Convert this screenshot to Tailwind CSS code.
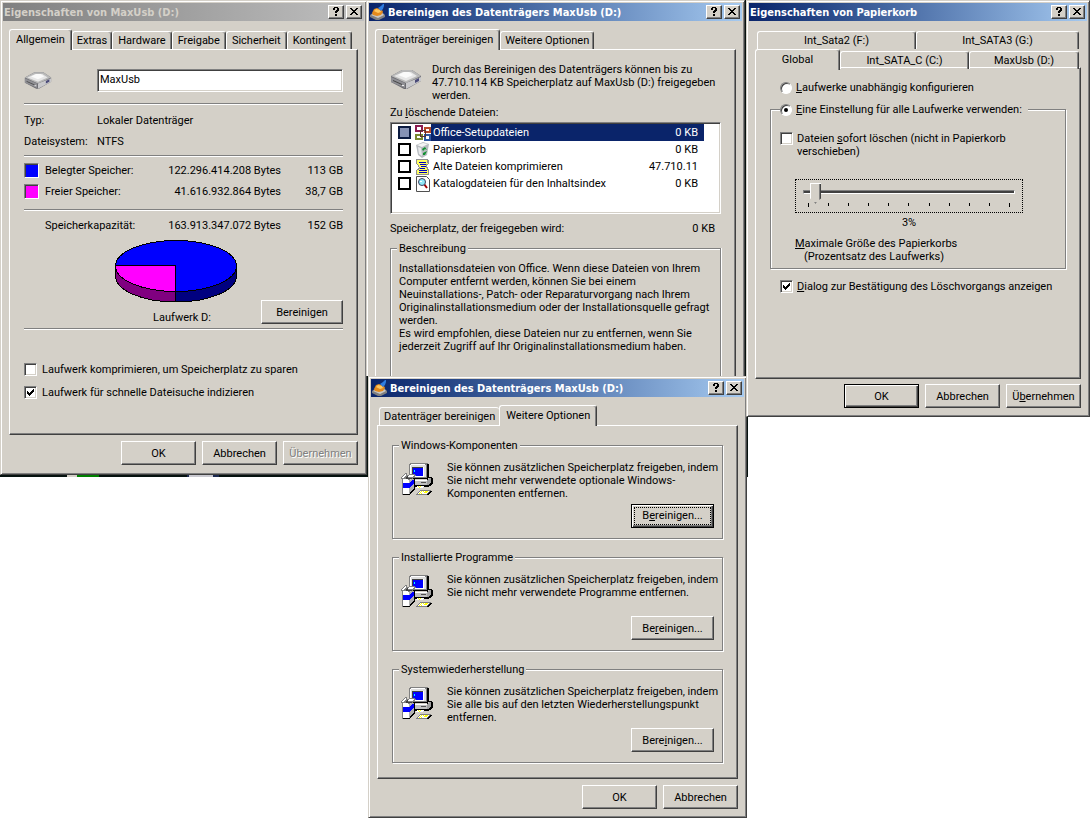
<!DOCTYPE html>
<html lang="de">
<head>
    <meta charset="UTF-8">
    <meta name="viewport" content="width=device-width, initial-scale=1.0">
    <title>Eigenschaften von MaxUsb (D:)</title>
    <script src="https://cdn.jsdelivr.net/npm/@tailwindcss/browser@4"></script>
</head>
<body class="bg-white font-[Roboto,sans-serif] text-[11px] leading-[13px] text-black">

<!-- Shared icons -->
<svg class="hidden">
    <symbol id="help" viewBox="0 0 14 12"><path d="M4 2h1V1h4v1h1v3H9v1H8v1H6V5h1V4h1V2H6v2H4zM6 8h2v2H6z"/></symbol>
    <symbol id="close" viewBox="0 0 14 12"><path d="M3 2h2v1h1v1h2V3h1V2h2v1h-1v1H9v1H8v1h1v1h1v1h1v1H9V8H8V7H6v1H5v1H3V8h1V7h1V6h1V5H5V4H4V3H3z"/></symbol>
    <symbol id="check" viewBox="0 0 9 9"><path d="M1 3h1v1h1v1h1V4h1V3h1V2h1V1h1v3H7v1H6v1H5v1H4v1H3V7H2V6H1z"/></symbol>
    <symbol id="drive" viewBox="0 0 32 19">
        <path d="M1 6 12 0h10l9 6v5l-14 8h-3L1 12z" fill="#6b6b70"/>
        <path d="M1 6 12 0h10l9 6-15 7z" fill="#b9b9b9"/>
        <path d="m4 6 9-4h8l6 4-11 5z" fill="#e6e6e6"/>
        <path d="m8 5 6-3h5l4 3-7 3z" fill="#fafafa"/>
        <path d="m1 7 14 6v5L1 12z" fill="#909095"/>
        <path d="m3 10 9 4v1l-9-4z" fill="#444"/>
        <path d="m16 13 15-6v4l-15 8z" fill="#c9c9cc"/>
        <path d="m25 10 4-2v3l-4 2z" fill="#4a4a78"/>
        <path d="M12 15h2v1h-2z" fill="#eee"/>
    </symbol>
    <symbol id="cleanup" viewBox="0 0 16 16">
        <path d="m0 11 4-3h8l3 3v2l-6 3H6l-6-3z" fill="#808080"/>
        <path d="m1 11 4-2h7l2 2-6 3z" fill="#c8c8c8"/>
        <path d="m2 9 2-4 3-1 5 2 1 2-2 3-4 1-4-1z" fill="#e48a1c"/>
        <path d="m4 7 2-2 4 1 1 2-3 1z" fill="#ffc860"/>
        <path d="M8 4 11 2 13 0h1v2l-1 3-2 2z" fill="#2f7de0"/>
    </symbol>
    <symbol id="setup" viewBox="0 0 32 32">
        <!-- monitor -->
        <path d="M8 1h1V0h18v15h-1v1H9v-1H8z" fill="#808080"/>
        <path d="M27 1h1v14h-1v1H10v-1h16V1z" fill="#000"/>
        <path d="M9 2h1V1h14v1h1v12H9z" fill="#dedede"/>
        <path d="M9 2h1V1h14v1H10v12H9z" fill="#fff"/>
        <path d="M11 4h11v1H12v8h-1z" fill="#404040"/>
        <path d="M12 5h10v8H12z" fill="#0000ff"/>
        <path d="M22 4h1v10H12v-1h10z" fill="#fff"/>
        <path d="M13 7h1v2h-1z" fill="#00ffff"/>
        <!-- case -->
        <path d="M14 17h12v-1h2v-2h3v1h1v6h-1v1h-1v1h-2v1H14z" fill="#000"/>
        <path d="M14 17h12v5H14z" fill="#c0c0c0"/>
        <path d="M14 17h12v1H14z" fill="#fff"/>
        <path d="M26 17h1v-1h1v-1h2v5h-1v1h-1v1h-2z" fill="#a0a0a0"/>
        <path d="M20 19h5v1h-5z" fill="#505050"/>
        <path d="M16 23h7v1h-1v1h-7v-1h1z" fill="#fff"/>
        <path d="M17 23h1v1h-1zM19 23h1v1h-1zM18 24h1v1h-1z" fill="#ffff00"/>
        <!-- box -->
        <path d="M13 16h1v11h-1v1h-1v1h-1v1h-1v1H9v1H2v-1h6V18h1v-1h2v-1z" fill="#000"/>
        <path d="M1 16h1v16H1z" fill="#808080"/>
        <path d="M2 16h6v15H2z" fill="#fff"/>
        <path d="M8 17h2v-1h3v10h-1v1h-1v1h-1v1H9v2H8z" fill="#b0b0b0"/>
        <path d="M2 20h6v5H2zM8 20h1v-1h1v-1h1v-1h2v4h-1v1h-1v1h-1v1H9v1H8z" fill="#0000ff"/>
        <path d="M0 14h1v-1h1v-1h1v-1h1v-1h2v2h2v-1h6v1h1v1h-1v1h-2v2H9v1H7v-1H0z" fill="#808080"/>
        <path d="M1 14h1v-1h1v-1h1v-1h1v2H4v1H3v1H1zM8 12h5v1h-1v1H7v-1h1z" fill="#fff"/>
        <path d="M6 13h1v2h4v1H5v-2h1z" fill="#404040"/>
        <!-- keyboard -->
        <path d="M18 28h1v-1h11v1h-1v1h-1v1h-1v1h-1v1H15v-1h1v-1h1v-1h1z" fill="#808080"/>
        <path d="M19 28h9v1h-1v1h-1v1h-9v-1h1v-1h1z" fill="#fff"/>
        <path d="M20 28h1v1h-1zM22 28h1v1h-1zM24 28h3v1h-3zM19 29h1v1h-1zM23 29h3v1h-3zM18 30h1v1h-1zM20 30h1v1h-1z" fill="#ffff00"/>
        <path d="M30 28h1v1h-1v1h-1v1h-1v1h-2v-1h1v-1h1v-1h1v-1z" fill="#000"/>
    </symbol>
</svg>

<!-- Strip of desktop that shows behind the windows -->
<div class="absolute left-0 top-0 h-[477px] w-[748px] bg-[#06120f]">
    <div class="absolute bottom-0 left-[67px] h-[3px] w-8 bg-[#008000]"></div>
    <div class="absolute bottom-0 left-[67px] h-[2px] w-[10px] bg-[#d4d0c8]"></div>
    <div class="absolute bottom-0 left-[187px] h-[3px] w-8 bg-[#1c2a50]"></div>
    <div class="absolute bottom-0 left-[189px] h-[2px] w-6 bg-[#c9c9d0]"></div>
</div>

<main class="relative grid grid-cols-[366fr_380fr_345fr] items-start">

    <!-- Window: drive properties -->
    <section class="-mr-px border border-b-[#404040] border-l-[#d4d0c8] border-r-[#404040] border-t-[#d4d0c8] bg-[#d4d0c8] p-[2px] shadow-[inset_1px_1px_0_#fff,inset_-1px_-1px_0_#808080]">
        <header class="flex h-[18px] items-center gap-[2px] bg-linear-to-r from-[#808080] to-[#c0c0c0] pl-px pr-[2px]">
            <h1 class="mr-auto font-['DejaVu_Sans_Condensed',sans-serif] text-[11px] font-bold text-[#d4d0c8]">Eigenschaften von MaxUsb (D:)</h1>
            <button aria-label="Hilfe" class="h-[14px] w-4 border border-b-[#404040] border-l-white border-r-[#404040] border-t-white bg-[#d4d0c8] shadow-[inset_-1px_-1px_0_#808080]"><svg class="h-3 w-[14px]" shape-rendering="crispEdges"><use href="#help"/></svg></button>
            <button aria-label="Schließen" class="h-[14px] w-4 border border-b-[#404040] border-l-white border-r-[#404040] border-t-white bg-[#d4d0c8] shadow-[inset_-1px_-1px_0_#808080]"><svg class="h-3 w-[14px]" shape-rendering="crispEdges"><use href="#close"/></svg></button>
        </header>

        <nav class="mx-[6px] mt-2 flex h-5 items-end" role="tablist">
            <button role="tab" aria-selected="true" class="relative z-10 -mb-px h-[21px] rounded-t-[3px] border border-b-0 border-l-white border-r-[#404040] border-t-white bg-[#d4d0c8] px-[6px] pb-[2px] shadow-[inset_-1px_0_0_#808080]">Allgemein</button>
            <button role="tab" class="h-[18px] rounded-t-[3px] border border-b-0 border-l-white border-r-[#404040] border-t-white px-1 shadow-[inset_-1px_0_0_#808080]">Extras</button>
            <button role="tab" class="h-[18px] rounded-t-[3px] border border-b-0 border-l-white border-r-[#404040] border-t-white px-[5px] shadow-[inset_-1px_0_0_#808080]">Hardware</button>
            <button role="tab" class="h-[18px] rounded-t-[3px] border border-b-0 border-l-white border-r-[#404040] border-t-white px-[5px] shadow-[inset_-1px_0_0_#808080]">Freigabe</button>
            <button role="tab" class="h-[18px] rounded-t-[3px] border border-b-0 border-l-white border-r-[#404040] border-t-white px-[5px] shadow-[inset_-1px_0_0_#808080]">Sicherheit</button>
            <button role="tab" class="h-[18px] rounded-t-[3px] border border-b-0 border-l-white border-r-[#404040] border-t-white px-[5px] shadow-[inset_-1px_0_0_#808080]">Kontingent</button>
        </nav>

        <div class="mx-[6px] border border-b-[#404040] border-l-white border-r-[#404040] border-t-white px-[14px] pb-[30px] pt-[19px] shadow-[inset_-1px_-1px_0_#808080]">
            <div class="flex items-center">
                <svg class="h-[19px] w-7" preserveAspectRatio="none"><use href="#drive"/></svg>
                <input type="text" aria-label="Bezeichnung" value="MaxUsb" class="ml-[45px] h-[23px] min-w-0 flex-1 border border-b-white border-l-[#808080] border-r-white border-t-[#808080] bg-white px-[2px] pb-[2px] shadow-[inset_1px_1px_0_#404040,inset_-1px_-1px_0_#d4d0c8]">
            </div>
            <hr class="mt-[11px] border-b border-t border-b-white border-t-[#808080]">
            <dl class="mt-[5px] grid grid-cols-[73px_1fr] leading-[21px]">
                <dt>Typ:</dt><dd>Lokaler Datenträger</dd>
                <dt>Dateisystem:</dt><dd>NTFS</dd>
            </dl>
            <hr class="mt-[3px] border-b border-t border-b-white border-t-[#808080]">
            <table class="mt-[3px] w-full text-right leading-[21px]">
                <tr>
                    <td class="w-[21px] p-0"><div class="h-[15px] w-[15px] border border-b-white border-l-[#808080] border-r-white border-t-[#808080] bg-[#0000ff] shadow-[inset_1px_1px_0_#404040]"></div></td>
                    <th class="p-0 text-left font-normal">Belegter Speicher:</th>
                    <td class="p-0">122.296.414.208 Bytes</td>
                    <td class="w-[62px] p-0">113 GB</td>
                </tr>
                <tr>
                    <td class="p-0"><div class="h-[15px] w-[15px] border border-b-white border-l-[#808080] border-r-white border-t-[#808080] bg-[#ff00ff] shadow-[inset_1px_1px_0_#404040]"></div></td>
                    <th class="p-0 text-left font-normal">Freier Speicher:</th>
                    <td class="p-0">41.616.932.864 Bytes</td>
                    <td class="p-0">38,7 GB</td>
                </tr>
            </table>
            <hr class="mt-[7px] border-b border-t border-b-white border-t-[#808080]">
            <table class="mt-1 w-full text-right leading-[21px]">
                <tr>
                    <td class="w-[21px] p-0"></td>
                    <th class="p-0 text-left font-normal">Speicherkapazität:</th>
                    <td class="p-0">163.913.347.072 Bytes</td>
                    <td class="w-[62px] p-0">152 GB</td>
                </tr>
            </table>
            <div class="mt-1 flex items-end">
                <figure class="ml-[90px] w-[136px] text-center">
                    <svg class="block" width="124" height="63" viewBox="0 0 124 63" shape-rendering="crispEdges" stroke="#000">
                        <path d="M1.5 26v10a60.5 26 0 0 0 60 26V52z" fill="#800080"/>
                        <path d="M122.5 26v10A60.5 26 0 0 1 61.5 62V52z" fill="#000080"/>
                        <ellipse cx="62" cy="26" rx="60.5" ry="25.5" fill="#0000ff"/>
                        <path d="M61.500 25.500H1.500A60.500 25.500 0 0 0 61.500 51.500z" fill="#ff00ff"/>
                    </svg>
                    <figcaption class="mt-2">Laufwerk D:</figcaption>
                </figure>
                <button class="ml-auto h-6 w-[82px] border border-b-[#404040] border-l-white border-r-[#404040] border-t-white shadow-[inset_-1px_-1px_0_#808080]">Bereinigen</button>
            </div>
            <hr class="mt-1 border-b border-t border-b-white border-t-[#808080]">
            <div class="mt-7">
                <label class="flex h-[23px] items-center gap-[5px]">
                    <input type="checkbox" class="h-[13px] w-[13px] appearance-none border border-b-white border-l-[#808080] border-r-white border-t-[#808080] bg-white shadow-[inset_1px_1px_0_#404040,inset_-1px_-1px_0_#d4d0c8]">
                    Laufwerk komprimieren, um Speicherplatz zu sparen
                </label>
                <label class="flex h-[23px] items-center gap-[5px]">
                    <span class="grid place-items-center">
                        <input type="checkbox" checked class="col-start-1 row-start-1 h-[13px] w-[13px] appearance-none border border-b-white border-l-[#808080] border-r-white border-t-[#808080] bg-white shadow-[inset_1px_1px_0_#404040,inset_-1px_-1px_0_#d4d0c8]">
                        <svg class="pointer-events-none col-start-1 row-start-1 h-[9px] w-[9px]" shape-rendering="crispEdges"><use href="#check"/></svg>
                    </span>
                    Laufwerk für schnelle Dateisuche indizieren
                </label>
            </div>
        </div>

        <footer class="mx-[6px] mb-[7px] mt-[6px] flex justify-end gap-[6px]">
            <button class="h-6 w-[75px] border border-b-[#404040] border-l-white border-r-[#404040] border-t-white shadow-[inset_-1px_-1px_0_#808080]">OK</button>
            <button class="h-6 w-[75px] border border-b-[#404040] border-l-white border-r-[#404040] border-t-white shadow-[inset_-1px_-1px_0_#808080]">Abbrechen</button>
            <button disabled class="h-6 w-[75px] border border-b-[#404040] border-l-white border-r-[#404040] border-t-white text-[#808080] shadow-[inset_-1px_-1px_0_#808080] text-shadow-[1px_1px_0_#fff]">Übernehmen</button>
        </footer>
    </section>

    <div class="min-w-0">
        <!-- Window: disk cleanup, lower part hidden by the next one -->
        <section class="relative mr-px border border-b-0 border-l-[#d4d0c8] border-r-[#404040] border-t-[#d4d0c8] bg-[#d4d0c8] p-[2px] pb-0 shadow-[inset_1px_1px_0_#fff,inset_-1px_0_0_#808080]">
            <header class="flex h-[18px] items-center gap-[2px] bg-linear-to-r from-[#0a246a] to-[#a6caf0] pl-px pr-[2px]">
                <svg class="h-4 w-4"><use href="#cleanup"/></svg>
                <h1 class="mr-auto font-['DejaVu_Sans_Condensed',sans-serif] text-[11px] font-bold text-white">Bereinigen des Datenträgers MaxUsb (D:)</h1>
                <button aria-label="Hilfe" class="h-[14px] w-4 border border-b-[#404040] border-l-white border-r-[#404040] border-t-white bg-[#d4d0c8] shadow-[inset_-1px_-1px_0_#808080]"><svg class="h-3 w-[14px]" shape-rendering="crispEdges"><use href="#help"/></svg></button>
                <button aria-label="Schließen" class="h-[14px] w-4 border border-b-[#404040] border-l-white border-r-[#404040] border-t-white bg-[#d4d0c8] shadow-[inset_-1px_-1px_0_#808080]"><svg class="h-3 w-[14px]" shape-rendering="crispEdges"><use href="#close"/></svg></button>
            </header>

            <nav class="mx-[6px] mt-2 flex h-5 items-end" role="tablist">
                <button role="tab" aria-selected="true" class="relative z-10 -mb-px h-[21px] rounded-t-[3px] border border-b-0 border-l-white border-r-[#404040] border-t-white bg-[#d4d0c8] px-[6px] pb-[2px] shadow-[inset_-1px_0_0_#808080]">Datenträger bereinigen</button>
                <button role="tab" class="h-[18px] rounded-t-[3px] border border-b-0 border-l-white border-r-[#404040] border-t-white px-1 shadow-[inset_-1px_0_0_#808080]">Weitere Optionen</button>
            </nav>

            <div class="mx-[6px] border border-b-0 border-l-white border-r-[#404040] border-t-white px-[14px] pt-[13px] shadow-[inset_-1px_0_0_#808080]">
                <div class="flex gap-[10px]">
                    <svg class="mt-[7px] h-[19px] w-8 shrink-0"><use href="#drive"/></svg>
                    <p>Durch das Bereinigen des Datenträgers können bis zu<br>47.710.114 KB Speicherplatz auf MaxUsb (D:) freigegeben<br>werden.</p>
                </div>
                <p class="mt-1">Zu <u>l</u>öschende Dateien:</p>
                <div class="mt-[3px] h-[92px] border border-b-white border-l-[#808080] border-r-white border-t-[#808080] bg-white py-px pl-[7px] pr-4 shadow-[inset_1px_1px_0_#404040,inset_-1px_-1px_0_#d4d0c8]">
                    <label class="flex h-[17px] items-center">
                        <input type="checkbox" class="h-[13px] w-[13px] appearance-none border-2 border-[#0a1a40] bg-[#8592b5]">
                        <svg class="ml-1 h-4 w-4" viewBox="0 0 16 16" fill="none" stroke-width="2" shape-rendering="crispEdges">
                            <path d="M1 1h6v5H1z" stroke="#8c1c50"/><path d="M10 3h5v4h-5z" stroke="#b84a28"/>
                            <path d="M1 10h6v4H1z" stroke="#7a8a30"/><path d="M10 10h5v5h-5z" stroke="#3058a0"/>
                            <path d="M5.500 5.500h5v6h-5z" stroke="#5a3030" stroke-width="1"/>
                        </svg>
                        <span class="flex h-full flex-1 items-center justify-between bg-[#0a246a] pl-[2px] pr-[6px] text-white"><span>Office-Setupdateien</span><span>0 KB</span></span>
                    </label>
                    <label class="flex h-[17px] items-center">
                        <input type="checkbox" class="h-[13px] w-[13px] appearance-none border-2 border-black bg-white">
                        <svg class="ml-1 h-4 w-4" viewBox="0 0 16 16">
                            <path d="m1 3 7-3 6 2-2 11-5 3-4-3z" fill="#b8bcc0"/><path d="m2 3 6-2 5 1-6 3z" fill="#f4f4f4"/>
                            <path d="m3 5 3 1 1 8-3-2z" fill="#e8eaec"/>
                            <path d="m7 7 3-2 2 3-2-1-2 2zM8 11l4-2-2 4-2 0z" fill="#109030"/>
                        </svg>
                        <span class="flex h-full flex-1 items-center justify-between pl-[2px] pr-[6px]"><span>Papierkorb</span><span>0 KB</span></span>
                    </label>
                    <label class="flex h-[17px] items-center">
                        <input type="checkbox" class="h-[13px] w-[13px] appearance-none border-2 border-black bg-white">
                        <svg class="ml-1 h-4 w-4" viewBox="0 0 16 16" shape-rendering="crispEdges">
                            <path d="M1 0h12v1h1v4h-1v1h-1v2h1v2h1v6H1v-5h1v-1h1V9h1V8H3V6H2V5H1z" fill="#909090"/>
                            <path d="M2 1h10v3h1v1h-2v4h1v2h1v4H2v-4h2v-1h1V8H4V6H3V5H2z" fill="#ffff60"/>
                            <path d="M4 3h7v1H4zM5 5h6v1H5zM6 7h5v1H6zM5 9h5v1H5zM4 11h8v1H4zM4 13h8v1H4z" fill="#0000c0"/>
                        </svg>
                        <span class="flex h-full flex-1 items-center justify-between pl-[2px] pr-[6px]"><span>Alte Dateien komprimieren</span><span>47.710.11</span></span>
                    </label>
                    <label class="flex h-[17px] items-center">
                        <input type="checkbox" class="h-[13px] w-[13px] appearance-none border-2 border-black bg-white">
                        <svg class="ml-1 h-4 w-4" viewBox="0 0 16 16">
                            <path d="M1.500.5h10l3 3v12h-13z" fill="#fff" stroke="#505050"/>
                            <path d="m9 8 3 4" stroke="#a00000" stroke-width="2"/>
                            <circle cx="7" cy="6" r="3.500" fill="#90e8f8" stroke="#404060"/>
                            <path d="M5 5h2v1H5z" fill="#fff"/>
                        </svg>
                        <span class="flex h-full flex-1 items-center justify-between pl-[2px] pr-[6px]"><span>Katalogdateien für den Inhaltsindex</span><span>0 KB</span></span>
                    </label>
                </div>
                <p class="mt-2 flex justify-between pr-[6px]"><span>Speicherplatz, der freigegeben wird:</span><span>0 KB</span></p>
                <fieldset class="mt-[7px] border border-b-0 border-[#808080] px-2 pb-[23px] shadow-[1px_0_0_#fff,inset_1px_1px_0_#fff]">
                    <legend class="-ml-[2px] bg-[#d4d0c8] px-[2px]">Beschreibung</legend>
                    <p class="pt-[7px]">Installationsdateien von Office. Wenn diese Dateien von Ihrem<br>Computer entfernt werden, können Sie bei einem<br>Neuinstallations-, Patch- oder Reparaturvorgang nach Ihrem<br>Originalinstallationsmedium oder der Installationsquelle gefragt<br>werden.<br>Es wird empfohlen, diese Dateien nur zu entfernen, wenn Sie<br>jederzeit Zugriff auf Ihr Originalinstallationsmedium haben.</p>
                </fieldset>
            </div>
        </section>

        <!-- Window: disk cleanup, more options -->
        <section class="-mr-px ml-[2px] border border-b-[#404040] border-l-[#d4d0c8] border-r-[#404040] border-t-[#d4d0c8] bg-[#d4d0c8] p-[2px] shadow-[inset_1px_1px_0_#fff,inset_-1px_-1px_0_#808080]">
            <header class="flex h-[18px] items-center gap-[2px] bg-linear-to-r from-[#0a246a] to-[#a6caf0] pl-px pr-[2px]">
                <svg class="h-4 w-4"><use href="#cleanup"/></svg>
                <h1 class="mr-auto font-['DejaVu_Sans_Condensed',sans-serif] text-[11px] font-bold text-white">Bereinigen des Datenträgers MaxUsb (D:)</h1>
                <button aria-label="Hilfe" class="h-[14px] w-4 border border-b-[#404040] border-l-white border-r-[#404040] border-t-white bg-[#d4d0c8] shadow-[inset_-1px_-1px_0_#808080]"><svg class="h-3 w-[14px]" shape-rendering="crispEdges"><use href="#help"/></svg></button>
                <button aria-label="Schließen" class="h-[14px] w-4 border border-b-[#404040] border-l-white border-r-[#404040] border-t-white bg-[#d4d0c8] shadow-[inset_-1px_-1px_0_#808080]"><svg class="h-3 w-[14px]" shape-rendering="crispEdges"><use href="#close"/></svg></button>
            </header>

            <nav class="mx-[6px] mt-2 flex h-5 items-end pl-[2px]" role="tablist">
                <button role="tab" class="h-[18px] rounded-t-[3px] border border-b-0 border-r-0 border-l-white border-t-white px-1">Datenträger bereinigen</button>
                <button role="tab" aria-selected="true" class="relative z-10 -mb-px h-[21px] rounded-t-[3px] border border-b-0 border-l-white border-r-[#404040] border-t-white bg-[#d4d0c8] px-[6px] pb-[2px] shadow-[inset_-1px_0_0_#808080]">Weitere Optionen</button>
            </nav>

            <div class="mx-[6px] flex flex-col gap-3 border border-b-[#404040] border-l-white border-r-[#404040] border-t-white px-[14px] pb-[15px] pt-[13px] shadow-[inset_-1px_-1px_0_#808080]">
                <fieldset class="min-w-0 border border-[#808080] px-2 pb-[10px] shadow-[1px_1px_0_#fff,inset_1px_1px_0_#fff]">
                    <legend class="-ml-[2px] bg-[#d4d0c8] px-[2px]">Windows-Komponenten</legend>
                    <div class="flex h-12 gap-[14px] pt-[9px]">
                        <svg class="mt-[2px] h-8 w-8 shrink-0" shape-rendering="crispEdges"><use href="#setup"/></svg>
                        <p class="whitespace-nowrap">Sie können zusätzlichen Speicherplatz freigeben, indem<br>Sie nicht mehr verwendete optionale Windows-<br>Komponenten entfernen.</p>
                    </div>
                    <button class="ml-auto mt-1 block h-6 w-[83px] border border-black p-[2px] shadow-[inset_1px_1px_0_#fff,inset_-1px_-1px_0_#404040,inset_-2px_-2px_0_#808080]"><span class="block border border-dotted border-black leading-4">B<u>e</u>reinigen...</span></button>
                </fieldset>
                <fieldset class="min-w-0 border border-[#808080] px-2 pb-[10px] shadow-[1px_1px_0_#fff,inset_1px_1px_0_#fff]">
                    <legend class="-ml-[2px] bg-[#d4d0c8] px-[2px]">Installierte Programme</legend>
                    <div class="flex h-12 gap-[14px] pt-[9px]">
                        <svg class="mt-[2px] h-8 w-8 shrink-0" shape-rendering="crispEdges"><use href="#setup"/></svg>
                        <p class="whitespace-nowrap">Sie können zusätzlichen Speicherplatz freigeben, indem<br>Sie nicht mehr verwendete Programme entfernen.</p>
                    </div>
                    <button class="ml-auto mt-1 block h-6 w-[83px] border border-b-[#404040] border-l-white border-r-[#404040] border-t-white shadow-[inset_-1px_-1px_0_#808080]">Be<u>r</u>einigen...</button>
                </fieldset>
                <fieldset class="min-w-0 border border-[#808080] px-2 pb-[10px] shadow-[1px_1px_0_#fff,inset_1px_1px_0_#fff]">
                    <legend class="-ml-[2px] bg-[#d4d0c8] px-[2px]">Systemwiederherstellung</legend>
                    <div class="flex h-12 gap-[14px] pt-[9px]">
                        <svg class="mt-[2px] h-8 w-8 shrink-0" shape-rendering="crispEdges"><use href="#setup"/></svg>
                        <p class="whitespace-nowrap">Sie können zusätzlichen Speicherplatz freigeben, indem<br>Sie alle bis auf den letzten Wiederherstellungspunkt<br>entfernen.</p>
                    </div>
                    <button class="ml-auto mt-1 block h-6 w-[83px] border border-b-[#404040] border-l-white border-r-[#404040] border-t-white shadow-[inset_-1px_-1px_0_#808080]">Bere<u>i</u>nigen...</button>
                </fieldset>
            </div>

            <footer class="mx-[6px] mb-[6px] mt-[6px] flex justify-end gap-[6px]">
                <button class="h-6 w-[75px] border border-b-[#404040] border-l-white border-r-[#404040] border-t-white shadow-[inset_-1px_-1px_0_#808080]">OK</button>
                <button class="h-6 w-[75px] border border-b-[#404040] border-l-white border-r-[#404040] border-t-white shadow-[inset_-1px_-1px_0_#808080]">Abbrechen</button>
            </footer>
        </section>
    </div>

    <!-- Window: recycle bin properties -->
    <section class="mr-px border border-b-[#404040] border-l-[#d4d0c8] border-r-[#404040] border-t-[#d4d0c8] bg-[#d4d0c8] p-[2px] shadow-[inset_1px_1px_0_#fff,inset_-1px_-1px_0_#808080]">
        <header class="flex h-[18px] items-center gap-[2px] bg-linear-to-r from-[#0a246a] to-[#a6caf0] pl-px pr-[2px]">
            <h1 class="mr-auto font-['DejaVu_Sans_Condensed',sans-serif] text-[11px] font-bold text-white">Eigenschaften von Papierkorb</h1>
            <button aria-label="Hilfe" class="h-[14px] w-4 border border-b-[#404040] border-l-white border-r-[#404040] border-t-white bg-[#d4d0c8] shadow-[inset_-1px_-1px_0_#808080]"><svg class="h-3 w-[14px]" shape-rendering="crispEdges"><use href="#help"/></svg></button>
            <button aria-label="Schließen" class="h-[14px] w-4 border border-b-[#404040] border-l-white border-r-[#404040] border-t-white bg-[#d4d0c8] shadow-[inset_-1px_-1px_0_#808080]"><svg class="h-3 w-[14px]" shape-rendering="crispEdges"><use href="#close"/></svg></button>
        </header>

        <nav class="mx-[6px] mt-[10px]" role="tablist">
            <div class="grid h-[18px] grid-cols-[159fr_163fr] px-[2px]">
                <button role="tab" class="rounded-t-[3px] border border-b-0 border-l-white border-r-[#404040] border-t-white shadow-[inset_-1px_0_0_#808080]">Int_Sata2 (F:)</button>
                <button role="tab" class="rounded-t-[3px] border border-b-0 border-l-white border-r-[#404040] border-t-white shadow-[inset_-1px_0_0_#808080]">Int_SATA3 (G:)</button>
            </div>
            <div class="grid h-[18px] grid-cols-[85fr_129fr_110fr] items-end pr-[2px]">
                <button role="tab" aria-selected="true" class="relative z-10 -mb-px h-[21px] rounded-t-[3px] border border-b-0 border-l-white border-r-[#404040] border-t-white bg-[#d4d0c8] pb-[2px] shadow-[inset_-1px_0_0_#808080]">Global</button>
                <button role="tab" class="h-[18px] rounded-t-[3px] border border-b-0 border-l-white border-r-[#404040] border-t-white shadow-[inset_-1px_0_0_#808080]">Int_SATA_C (C:)</button>
                <button role="tab" class="h-[18px] rounded-t-[3px] border border-b-0 border-l-white border-r-[#404040] border-t-white shadow-[inset_-1px_0_0_#808080]">MaxUsb (D:)</button>
            </div>
        </nav>

        <div class="mx-[6px] border border-b-[#404040] border-l-white border-r-[#404040] border-t-white px-[14px] pb-[85px] pt-[13px] shadow-[inset_-1px_-1px_0_#808080]">
            <label class="flex items-center gap-1 px-[10px]">
                <input type="radio" name="mode" class="h-3 w-3 appearance-none rounded-full border border-b-white border-l-[#808080] border-r-white border-t-[#808080] bg-white shadow-[inset_1px_1px_0_#404040]">
                <span><u>L</u>aufwerke unabhängig konfigurieren</span>
            </label>
            <fieldset class="mt-[9px] border border-[#808080] px-[9px] pb-[5px] shadow-[1px_1px_0_#fff,inset_1px_1px_0_#fff]">
                <legend class="bg-[#d4d0c8] pr-[6px]">
                    <label class="flex items-center gap-1">
                        <input type="radio" name="mode" checked class="grid h-3 w-3 appearance-none place-items-center rounded-full border border-b-white border-l-[#808080] border-r-white border-t-[#808080] bg-white shadow-[inset_1px_1px_0_#404040] checked:before:h-1 checked:before:w-1 checked:before:rounded-full checked:before:bg-black checked:before:content-['']">
                        <span><u>E</u>ine Einstellung für alle Laufwerke verwenden:</span>
                    </label>
                </legend>
                <label class="mt-4 flex items-start gap-1">
                    <input type="checkbox" class="h-[13px] w-[13px] shrink-0 appearance-none border border-b-white border-l-[#808080] border-r-white border-t-[#808080] bg-white shadow-[inset_1px_1px_0_#404040,inset_-1px_-1px_0_#d4d0c8]">
                    <span>Dateien <u>s</u>ofort löschen (nicht in Papierkorb<br>verschieben)</span>
                </label>
                <div class="ml-[15px] mr-[33px] mt-[21px] border border-dotted border-black px-[7px] pb-[5px] pt-px">
                    <input type="range" min="0" max="100" value="3" aria-label="Maximale Größe des Papierkorbs" class="block h-[21px] w-full appearance-none bg-transparent [&::-webkit-slider-runnable-track]:h-1 [&::-webkit-slider-runnable-track]:border [&::-webkit-slider-runnable-track]:border-b-white [&::-webkit-slider-runnable-track]:border-l-[#808080] [&::-webkit-slider-runnable-track]:border-r-white [&::-webkit-slider-runnable-track]:border-t-[#808080] [&::-webkit-slider-runnable-track]:bg-[#404040] [&::-webkit-slider-thumb]:-mt-2 [&::-webkit-slider-thumb]:h-[21px] [&::-webkit-slider-thumb]:w-[11px] [&::-webkit-slider-thumb]:appearance-none [&::-webkit-slider-thumb]:bg-[#d4d0c8] [&::-webkit-slider-thumb]:shadow-[inset_1px_1px_0_#fff,inset_-1px_-1px_0_#404040,inset_-2px_-2px_0_#808080] [&::-webkit-slider-thumb]:[clip-path:polygon(0_0,100%_0,100%_75%,50%_100%,0_75%)]">
                    <div class="flex justify-between px-[5px] pt-px">
                        <i class="h-1 w-px bg-black"></i><i class="h-[3px] w-px bg-black"></i><i class="h-[3px] w-px bg-black"></i><i class="h-[3px] w-px bg-black"></i><i class="h-[3px] w-px bg-black"></i><i class="h-[3px] w-px bg-black"></i><i class="h-[3px] w-px bg-black"></i><i class="h-[3px] w-px bg-black"></i><i class="h-[3px] w-px bg-black"></i><i class="h-[3px] w-px bg-black"></i><i class="h-1 w-px bg-black"></i>
                    </div>
                </div>
                <p class="mt-[3px] pr-[18px] text-center">3%</p>
                <p class="ml-[15px] mt-2"><u>M</u>aximale Größe des Papierkorbs</p>
                <p class="ml-6">(Prozentsatz des Laufwerks)</p>
            </fieldset>
            <label class="mt-[11px] flex items-center gap-1 px-[10px]">
                <span class="grid place-items-center">
                    <input type="checkbox" checked class="col-start-1 row-start-1 h-[13px] w-[13px] appearance-none border border-b-white border-l-[#808080] border-r-white border-t-[#808080] bg-white shadow-[inset_1px_1px_0_#404040,inset_-1px_-1px_0_#d4d0c8]">
                    <svg class="pointer-events-none col-start-1 row-start-1 h-[9px] w-[9px]" shape-rendering="crispEdges"><use href="#check"/></svg>
                </span>
                <span><u>D</u>ialog zur Bestätigung des Löschvorgangs anzeigen</span>
            </label>
        </div>

        <footer class="mx-[6px] mb-[6px] mt-[5px] flex justify-end gap-[6px]">
            <button class="h-6 w-[75px] border border-black shadow-[inset_1px_1px_0_#fff,inset_-1px_-1px_0_#404040,inset_-2px_-2px_0_#808080]">OK</button>
            <button class="h-6 w-[75px] border border-b-[#404040] border-l-white border-r-[#404040] border-t-white shadow-[inset_-1px_-1px_0_#808080]">Abbrechen</button>
            <button class="h-6 w-[75px] border border-b-[#404040] border-l-white border-r-[#404040] border-t-white shadow-[inset_-1px_-1px_0_#808080]">Ü<u>b</u>ernehmen</button>
        </footer>
    </section>
</main>
</body>
</html>
